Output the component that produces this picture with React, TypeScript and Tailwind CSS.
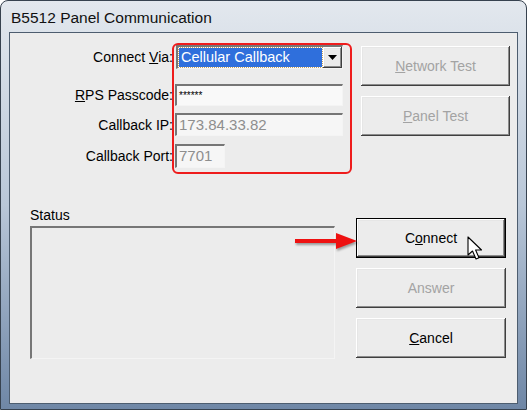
import React from 'react';

const raised =
  'bg-[#ececec] shadow-[inset_-1px_-1px_#3f3f3f,inset_1px_1px_#ffffff,inset_-2px_-2px_#8c8c8c,inset_2px_2px_#e6e6e6]';
const sunken =
  'border-t-2 border-l-2 border-b border-r border-t-[#767676] border-l-[#767676] border-b-[#f4f4f4] border-r-[#f4f4f4]';

const Btn: React.FC<{ label: React.ReactNode; disabled?: boolean; isDefault?: boolean; className?: string }> = ({
  label,
  disabled,
  isDefault,
  className,
}) => (
  <div
    className={`flex items-center justify-center h-[40px] text-[14px] ${raised} ${
      isDefault ? 'border border-black' : ''
    } ${disabled ? 'text-[#a3a3a3]' : 'text-black'} ${className ?? ''}`}
  >
    {label}
  </div>
);

const Row: React.FC<{ label: React.ReactNode; className?: string; children: React.ReactNode }> = ({
  label,
  className,
  children,
}) => (
  <div className={`flex items-center ${className ?? ''}`}>
    <div className="w-[163px] text-right text-[14px] text-black leading-none">{label}</div>
    {children}
  </div>
);

const App: React.FC = () => {
  return (
    <div className="w-[529px] h-[412px] bg-white" style={{ fontFamily: '"Liberation Sans", Arial, sans-serif' }}>
      <div className="w-[527px] h-[410px] rounded-t-[8px] border border-[#37424f] bg-gradient-to-b from-[#e3e8ee] via-[#b9c7d8] to-[#6f87a6] flex flex-col px-[8px] pb-[5px]">
        <div className="h-[31px] flex items-center pl-[2px] pt-[2px] text-[15.5px] text-[#111]">B5512 Panel Communication</div>
        <div className="flex-1 border border-[#4d5d6f] bg-[#ececec] relative flex flex-col">
          {/* top section */}
          <div className="h-[174px] flex">
            <div className="flex flex-col pt-[12px]">
              <Row label={<>Connect <u>V</u>ia:</>}>
                <div className={`ml-[3px] w-[167px] h-[24px] bg-white flex ${sunken}`}>
                  <div className="flex-1 m-[1px] bg-[#2f6fdc] outline-1 outline-dotted outline-[#c9a25a] text-white text-[14.5px] flex items-center pl-[2px]">
                    Cellular Callback
                  </div>
                  <div className={`w-[19px] flex items-center justify-center ${raised}`}>
                    <svg width="9" height="5" viewBox="0 0 9 5">
                      <path d="M0 0 L9 0 L4.5 5 Z" fill="#000" />
                    </svg>
                  </div>
                </div>
              </Row>
              <Row label={<><u>R</u>PS Passcode:</>} className="mt-[15px]">
                <div className={`ml-[2px] w-[168px] h-[22px] bg-[#f9f9f9] flex items-center pl-[2px] text-[10px] text-black ${sunken}`}>
                  ******
                </div>
              </Row>
              <Row label="Callback IP:" className="mt-[7px]">
                <div className={`ml-[2px] w-[168px] h-[23px] bg-[#f6f6f6] flex items-center pl-[2px] text-[15px] text-[#8e8e8e] ${sunken}`}>
                  173.84.33.82
                </div>
              </Row>
              <Row label="Callback Port:" className="mt-[8px]">
                <div className={`ml-[2px] w-[50px] h-[24px] bg-[#f6f6f6] flex items-center pl-[2px] text-[15px] text-[#8e8e8e] ${sunken}`}>
                  7701
                </div>
              </Row>
            </div>
            <div className="ml-auto mr-[7px] pt-[13px] w-[149px] flex flex-col gap-[10px]">
              <Btn disabled label={<><u>N</u>etwork Test</>} className="h-[39px]" />
              <Btn disabled label={<><u>P</u>anel Test</>} />
            </div>
          </div>

          {/* bottom section */}
          <div className="flex">
            <div className="pl-[20px] flex flex-col">
              <div className="text-[14px] leading-[16px] text-black">Status</div>
              <div className={`mt-[3px] w-[305px] h-[133px] bg-[#ececec] ${sunken}`} />
            </div>
            <div className="ml-auto mr-[11px] pt-[11px] w-[150px] flex flex-col gap-[10px]">
              <Btn isDefault label={<>C<u>o</u>nnect</>} />
              <Btn disabled label="Answer" />
              <Btn label={<><u>C</u>ancel</>} />
            </div>
          </div>

          {/* annotation overlays */}
          <div className="absolute left-[162px] top-[10px] w-[180px] h-[131px] rounded-[6px] border-2 border-[#ee1c1c]" />
          <svg className="absolute left-[284px] top-[198px] drop-shadow-[1px_2px_1px_rgba(0,0,0,0.35)]" width="64" height="20" viewBox="0 0 64 20">
            <path d="M1 8 L42 8 L42 2 L63 10 L42 18 L42 12 L1 12 Z" fill="#ee1111" />
          </svg>
          <svg className="absolute left-[457px] top-[203px]" width="17" height="25" viewBox="0 0 17 25">
            <path
              d="M1 1 L1 19 L5.5 15 L9 23 L12 21.8 L8.6 14 L14.5 14 Z"
              fill="#ffffff"
              stroke="#000000"
              strokeWidth="1.1"
              strokeLinejoin="round"
            />
          </svg>
        </div>
      </div>
    </div>
  );
};

export default App;
